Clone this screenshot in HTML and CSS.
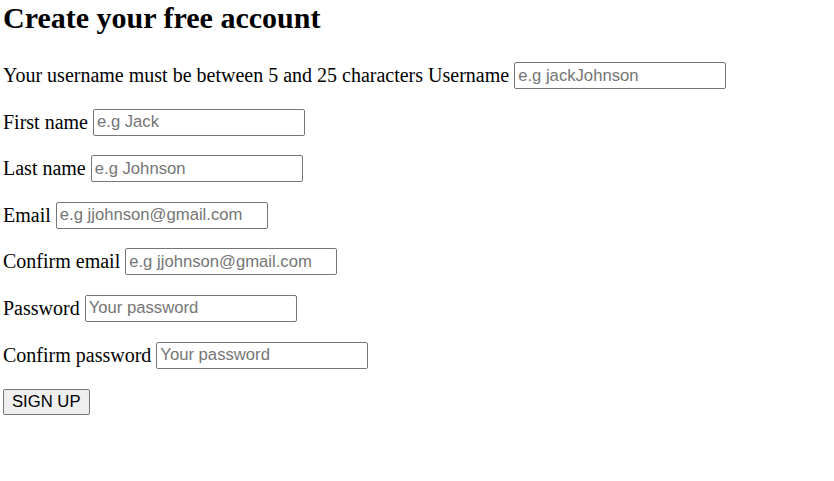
FILE: index.html
```html
<!DOCTYPE html>
<html>
<head>
<meta charset="utf-8">
<link rel="stylesheet" href="styles.css">
</head>
<body>
<h1 class="title">Create your free account</h1>
<form class="form">
  <div class="row">Your username must be between 5 and 25 characters Username <input class="field" type="text" placeholder="e.g jackJohnson"></div>
  <div class="row">First name <input class="field" type="text" placeholder="e.g Jack"></div>
  <div class="row">Last name <input class="field" type="text" placeholder="e.g Johnson"></div>
  <div class="row">Email <input class="field" type="text" placeholder="e.g jjohnson@gmail.com"></div>
  <div class="row">Confirm email <input class="field" type="text" placeholder="e.g jjohnson@gmail.com"></div>
  <div class="row">Password <input class="field" type="password" placeholder="Your password"></div>
  <div class="row">Confirm password <input class="field" type="password" placeholder="Your password"></div>
  <div class="row"><button class="btn" type="button">SIGN UP</button></div>
</form>
</body>
</html>
```
FILE: styles.css
```css
html, body {
  margin: 0;
  padding: 0;
  background: #fff;
}
body {
  padding: 0 3px;
  font-family: "Liberation Serif", "Times New Roman", serif;
  font-size: 20px;
  color: #000;
}
.title {
  margin: 0 0 26px 0;
  font-size: 30px;
  line-height: 36px;
  font-weight: bold;
}
.form {
  display: flex;
  flex-direction: column;
  gap: 19.6px;
}
.row {
  height: 27px;
  display: flex;
  align-items: center;
  white-space: pre;
}
.field {
  box-sizing: border-box;
  width: 212px;
  height: 27px;
  margin: 0;
  padding: 0 3px;
  border: 1px solid #767676;
  border-radius: 2px;
  font-family: "Liberation Sans", Arial, sans-serif;
  font-size: 16.67px;
  color: #000;
  background: #fff;
}
.field::placeholder {
  color: #757575;
}
.btn {
  box-sizing: border-box;
  height: 26px;
  margin: 0;
  padding: 0 8px;
  border: 1px solid #767676;
  border-radius: 2px;
  background: #efefef;
  font-family: "Liberation Sans", Arial, sans-serif;
  font-size: 16.67px;
  color: #000;
}
```
